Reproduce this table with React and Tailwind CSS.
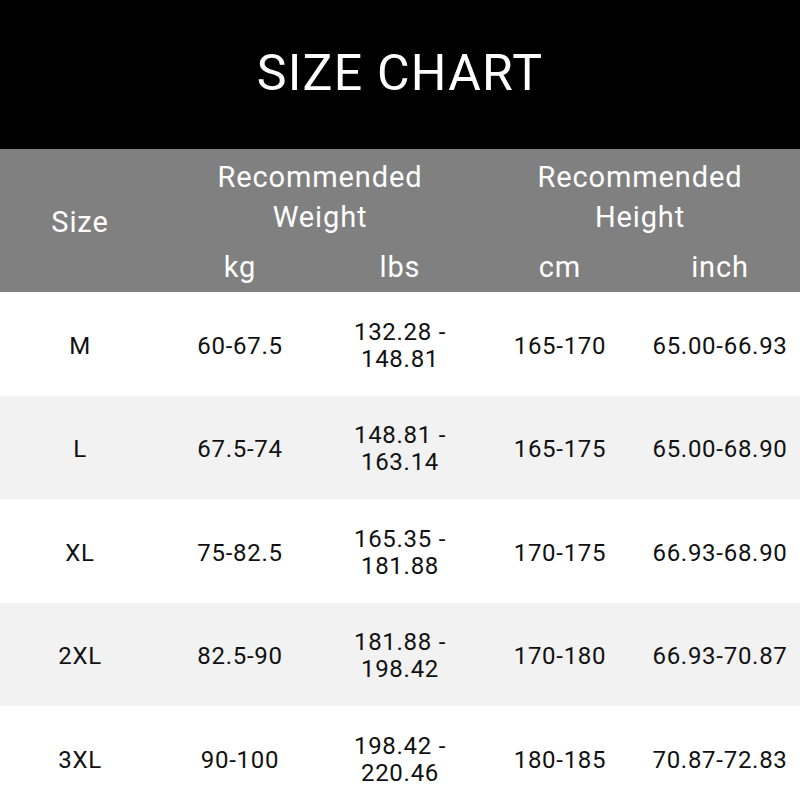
const rows = [
  { size: "M", kg: "60-67.5", lbs: ["132.28 -", "148.81"], cm: "165-170", inch: "65.00-66.93" },
  { size: "L", kg: "67.5-74", lbs: ["148.81 -", "163.14"], cm: "165-175", inch: "65.00-68.90" },
  { size: "XL", kg: "75-82.5", lbs: ["165.35 -", "181.88"], cm: "170-175", inch: "66.93-68.90" },
  { size: "2XL", kg: "82.5-90", lbs: ["181.88 -", "198.42"], cm: "170-180", inch: "66.93-70.87" },
  { size: "3XL", kg: "90-100", lbs: ["198.42 -", "220.46"], cm: "180-185", inch: "70.87-72.83" },
];

export default function App() {
  return (
    <div className="w-[800px] h-[800px] overflow-hidden bg-white font-['Roboto',sans-serif]">
      {/* title */}
      <div className="h-[149px] bg-black flex items-center justify-center pb-[4px]">
        <h1 className="text-white text-[50px] leading-none tracking-[0.025em]">SIZE CHART</h1>
      </div>

      {/* header */}
      <div className="h-[143px] bg-[#808080] text-white grid grid-cols-5 text-[29px] tracking-[0.03em]">
        <div className="flex items-center justify-center pt-[4px]">Size</div>
        <div className="col-span-2 flex flex-col">
          <div className="text-center leading-[40px] pt-[8px]">
            Recommended
            <br />
            Weight
          </div>
          <div className="grid grid-cols-2 mt-[10px] leading-[40px]">
            <div className="text-center">kg</div>
            <div className="text-center">lbs</div>
          </div>
        </div>
        <div className="col-span-2 flex flex-col">
          <div className="text-center leading-[40px] pt-[8px]">
            Recommended
            <br />
            Height
          </div>
          <div className="grid grid-cols-2 mt-[10px] leading-[40px]">
            <div className="text-center">cm</div>
            <div className="text-center">inch</div>
          </div>
        </div>
      </div>

      {/* rows */}
      {rows.map((r, i) => (
        <div
          key={r.size}
          className={`h-[103.5px] grid grid-cols-5 items-center pt-[4px] text-[#111] text-[24px] tracking-[0.03em] ${
            i % 2 === 1 ? "bg-[#f2f2f2]" : "bg-white"
          }`}
        >
          <div className="text-center">{r.size}</div>
          <div className="text-center">{r.kg}</div>
          <div className="text-center leading-[27px]">
            {r.lbs[0]}
            <br />
            {r.lbs[1]}
          </div>
          <div className="text-center">{r.cm}</div>
          <div className="text-center">{r.inch}</div>
        </div>
      ))}
    </div>
  );
}
